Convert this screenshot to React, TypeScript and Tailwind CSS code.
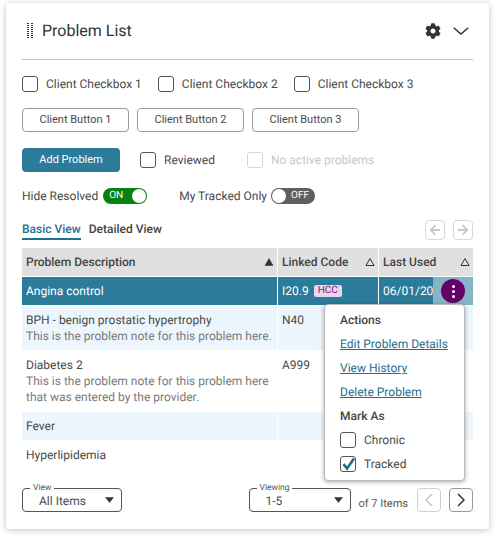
import { FaArrowLeft, FaArrowRight, FaCog } from 'react-icons/fa';

function Box({ checked, disabled }: { checked?: boolean; disabled?: boolean }) {
  return (
    <span
      className={`relative block h-4 w-4 shrink-0 rounded-[3px] border bg-white ${
        disabled ? 'border-[#d6d6d6]' : 'border-[#555555]'
      }`}
    >
      {checked && (
        <svg viewBox="0 0 16 16" className="absolute -left-px -top-px h-4 w-4">
          <path d="M3.5 8 L7 12.5 L14 2.5" fill="none" stroke="#1f6f8f" strokeWidth="2.6" />
        </svg>
      )}
    </span>
  );
}

function Check({ label, checked, disabled }: { label: string; checked?: boolean; disabled?: boolean }) {
  return (
    <label className={`flex items-center gap-2 whitespace-nowrap text-xs ${disabled ? 'text-[#c8c8c8]' : 'text-[#4a4a4a]'}`}>
      <Box checked={checked} disabled={disabled} />
      {label}
    </label>
  );
}

function SortIcon({ filled }: { filled?: boolean }) {
  return (
    <svg viewBox="0 0 10 10" className="h-[10px] w-[10px] shrink-0">
      <path d="M5 1.5 L9 8.5 L1 8.5 Z" fill={filled ? '#333333' : 'none'} stroke="#333333" strokeWidth={filled ? 0.5 : 1} />
    </svg>
  );
}

function HeaderCell({ label, width, filled }: { label: string; width: string; filled?: boolean }) {
  return (
    <div className={`flex h-full items-center justify-between bg-[#e0e0e0] pl-1 pr-[3px] text-xs font-medium text-[#444444] ${width}`}>
      {label}
      <SortIcon filled={filled} />
    </div>
  );
}

function Row({
  title,
  note,
  code,
  bg,
  height,
}: {
  title: string;
  note?: string;
  code?: string;
  bg: string;
  height: string;
}) {
  return (
    <div className={`flex gap-px ${height}`}>
      <div className={`w-[255px] px-1 pt-[6px] text-xs leading-4 text-[#4a4a4a] ${bg}`}>
        {title}
        {note && <p className="text-[#7a7a7a]">{note}</p>}
      </div>
      <div className={`w-[100px] px-1 pt-[6px] text-xs leading-4 text-[#4a4a4a] ${bg}`}>{code}</div>
      <div className={`w-[94px] ${bg}`} />
    </div>
  );
}

function Select({ label, value, width }: { label: string; value: string; width: string }) {
  return (
    <div className={`relative flex h-6 items-center justify-between rounded border border-[#555555] pl-4 pr-[7px] text-xs text-[#4a4a4a] ${width}`}>
      <span className="absolute -top-[6px] left-[7px] bg-white px-[3px] text-[8.5px] leading-[10px] text-[#555555]">{label}</span>
      <span className="pt-[2px]">{value}</span>
      <svg viewBox="0 0 10 6" className="h-[6px] w-[9px]">
        <path d="M0 0 H10 L5 6 Z" fill="#333333" />
      </svg>
    </div>
  );
}

export default function App() {
  return (
    <div className="h-[538px] w-[495px] bg-white pl-[6px] pt-[3px] font-['Roboto',sans-serif] [text-rendering:geometricPrecision]">
      <div className="relative h-[526px] w-[483px] rounded bg-white px-4 shadow-[0_1px_6px_rgba(0,0,0,0.25)]">
        {/* Header */}
        <div className="flex h-[57px] items-center justify-between border-b border-[#c4c4c4]">
          <div className="flex items-center gap-[9px] pl-[5px]">
            <svg viewBox="0 0 6 16" className="h-4 w-[6px]">
              {[0, 2, 4, 6, 8, 10, 12, 14].map((y) => (
                <g key={y}>
                  <rect x="0" y={y} width="2" height="1" fill="#333333" />
                  <rect x="4" y={y} width="2" height="1" fill="#333333" />
                </g>
              ))}
            </svg>
            <h2 className="text-[16px] text-[#333333]">Problem List</h2>
          </div>
          <div className="flex items-center gap-3 pr-[4px]">
            <FaCog className="h-4 w-4 text-[#333333]" />
            <svg viewBox="0 0 16 8" className="h-2 w-4">
              <path d="M0.7 0.7 L8 7 L15.3 0.7" fill="none" stroke="#333333" strokeWidth="1.5" />
            </svg>
          </div>
        </div>

        <div className="mt-4 flex h-4 items-center gap-4">
          <Check label="Client Checkbox 1" />
          <Check label="Client Checkbox 2" />
          <Check label="Client Checkbox 3" />
        </div>

        <div className="mt-4 flex gap-2">
          {['Client Button 1', 'Client Button 2', 'Client Button 3'].map((b) => (
            <button key={b} className="h-6 w-[107px] rounded border border-[#999999] pt-px text-[11px] text-[#4a4a4a]">
              {b}
            </button>
          ))}
        </div>

        <div className="mt-4 flex h-6 items-center">
          <button className="h-6 w-[98px] rounded bg-[#2b7b9b] pt-px text-[11px] text-white">Add Problem</button>
          <div className="ml-5">
            <Check label="Reviewed" />
          </div>
          <div className="ml-[32px]">
            <Check label="No active problems" disabled />
          </div>
        </div>

        <div className="mt-4 flex h-4 items-center text-xs text-[#4a4a4a]">
          <span>Hide Resolved</span>
          <span className="ml-[5px] flex h-4 w-11 items-center justify-between rounded-full bg-[#0a7f12] pl-[6px] pr-[1px] text-[10px] text-white">
            ON
            <span className="h-[14px] w-[14px] rounded-full bg-white" />
          </span>
          <span className="ml-8">My Tracked Only</span>
          <span className="ml-1 flex h-4 w-11 items-center justify-between rounded-full bg-[#5f5f5f] pl-[1px] pr-[6px] text-[10px] text-white">
            <span className="h-[14px] w-[14px] rounded-full bg-white" />
            OFF
          </span>
        </div>

        {/* Tabs */}
        <div className="mt-4 flex h-5 items-start justify-between">
          <div className="flex gap-2 pt-[1px] text-xs font-medium">
            <span className="h-[19px] border-b-2 border-[#1f6f8f] text-[#1f6f8f]">Basic View</span>
            <span className="text-[#444444]">Detailed View</span>
          </div>
          <div className="flex gap-2">
            <span className="flex h-5 w-5 items-center justify-center rounded border border-[#d6d6d6] text-[#c8c8c8]">
              <FaArrowLeft className="h-3 w-3" />
            </span>
            <span className="flex h-5 w-5 items-center justify-center rounded border border-[#d6d6d6] text-[#c8c8c8]">
              <FaArrowRight className="h-3 w-3" />
            </span>
          </div>
        </div>

        {/* Table */}
        <div className="relative mt-2 flex w-[451px] flex-col gap-px">
          <div className="flex h-7 gap-px">
            <HeaderCell label="Problem Description" width="w-[255px]" filled />
            <HeaderCell label="Linked Code" width="w-[100px]" />
            <HeaderCell label="Last Used" width="w-[94px]" />
          </div>
          <div className="flex h-7 gap-px text-xs text-white">
            <div className="flex w-[255px] items-center bg-[#2b7b9b] px-1">Angina control</div>
            <div className="flex w-[100px] items-center gap-[5px] bg-[#2b7b9b] px-1">
              I20.9
              <span className="rounded-[2px] bg-[#ecd3ee] px-[4px] text-[10px] leading-[12px] text-[#7b1f7f]">HCC</span>
            </div>
            <div className="flex w-[94px] items-center overflow-hidden bg-[#2b7b9b] pl-1">06/01/20</div>
          </div>
          <Row
            title="BPH - benign prostatic hypertrophy"
            note="This is the problem note for this problem here."
            code="N40"
            bg="bg-[#eef6fd]"
            height="h-11"
          />
          <Row
            title="Diabetes 2"
            note="This is the problem note for this problem here that was entered by the provider."
            code="A999"
            bg="bg-white"
            height="h-[60px]"
          />
          <Row title="Fever" bg="bg-[#eef6fd]" height="h-7" />
          <Row title="Hyperlipidemia" bg="bg-white" height="h-7" />

          {/* Row action button */}
          <div className="absolute right-0 top-[29px] flex h-7 w-10 items-center justify-center bg-[#86b4c6]">
            <span className="flex h-6 w-6 flex-col items-center justify-center gap-[2px] rounded-full bg-[#660066]">
              <span className="h-[3px] w-[3px] rounded-full bg-white" />
              <span className="h-[3px] w-[3px] rounded-full bg-white" />
              <span className="h-[3px] w-[3px] rounded-full bg-white" />
            </span>
          </div>
        </div>

        {/* Footer */}
        <div className="mt-[19px] flex h-6 items-center">
          <Select label="View" value="All Items" width="w-[102px]" />
          <div className="ml-[127px]">
            <Select label="Viewing" value="1-5" width="w-[102px]" />
          </div>
          <span className="ml-2 whitespace-nowrap pt-2 text-[11px] text-[#555555]">of 7 Items</span>
          <span className="ml-[9px] flex h-6 w-6 shrink-0 items-center justify-center rounded border border-[#d0d0d0]">
            <svg viewBox="0 0 8 14" className="h-[14px] w-2">
              <path d="M7 1 L1 7 L7 13" fill="none" stroke="#c8c8c8" strokeWidth="1.5" />
            </svg>
          </span>
          <span className="ml-2 flex h-6 w-6 shrink-0 items-center justify-center rounded border border-[#999999]">
            <svg viewBox="0 0 8 14" className="h-[14px] w-2">
              <path d="M1 1 L7 7 L1 13" fill="none" stroke="#333333" strokeWidth="1.5" />
            </svg>
          </span>
        </div>

        {/* Actions menu */}
        <div className="absolute left-[318px] top-[301px] flex h-[177px] w-[141px] flex-col whitespace-nowrap rounded border border-[#bbbbbb] bg-white pl-[15px] pt-[3px] text-xs leading-6 text-[#444444] shadow-[0_1px_4px_rgba(0,0,0,0.35)]">
          <span className="font-medium">Actions</span>
          <a className="text-[#1f6f8f] underline">Edit Problem Details</a>
          <a className="text-[#1f6f8f] underline">View History</a>
          <a className="text-[#1f6f8f] underline">Delete Problem</a>
          <span className="font-medium">Mark As</span>
          <div className="flex h-6 shrink-0 items-center">
            <Check label="Chronic" />
          </div>
          <div className="flex h-6 shrink-0 items-center">
            <Check label="Tracked" checked />
          </div>
        </div>
      </div>
    </div>
  );
}
